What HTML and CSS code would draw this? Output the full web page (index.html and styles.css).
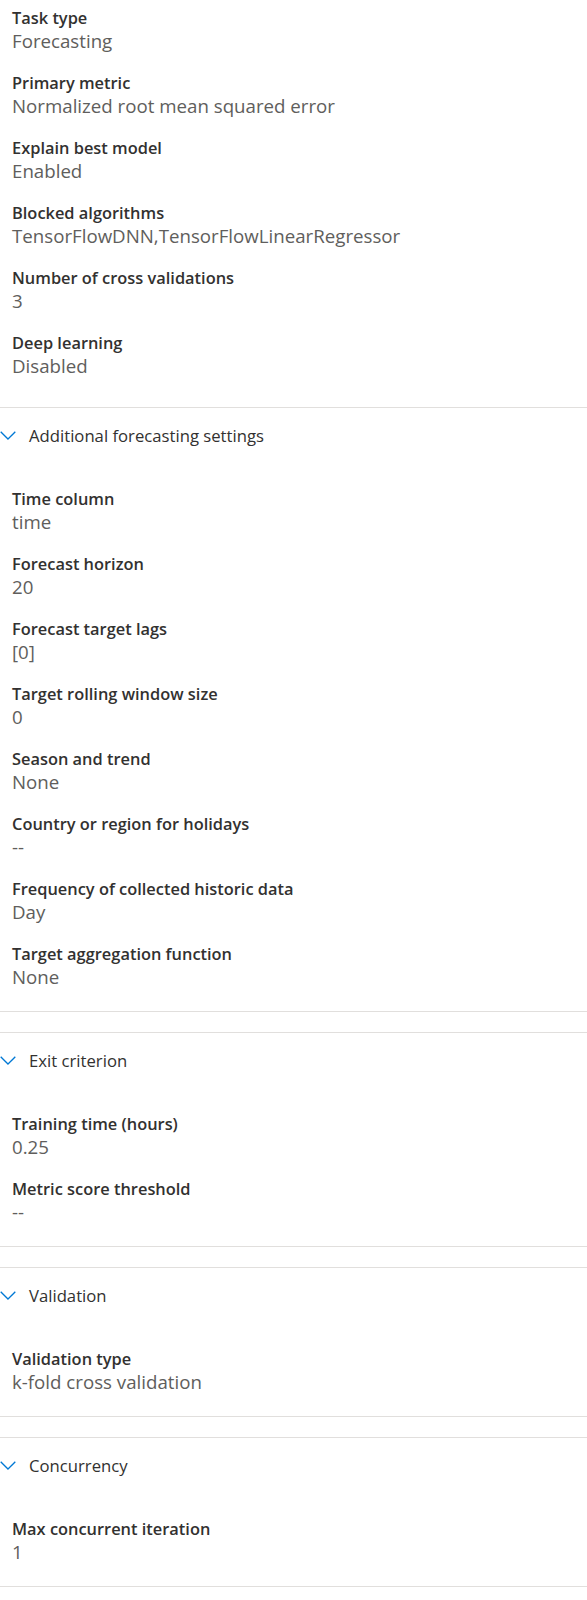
FILE: index.html
```html
<!DOCTYPE html>
<html>
<head>
<meta charset="utf-8">
<link rel="stylesheet" href="styles.css">
</head>
<body>
<div class="page">
  <div class="general">
    <div class="item"><div class="label">Task type</div><div class="value">Forecasting</div></div>
    <div class="item"><div class="label">Primary metric</div><div class="value">Normalized root mean squared error</div></div>
    <div class="item"><div class="label">Explain best model</div><div class="value">Enabled</div></div>
    <div class="item"><div class="label">Blocked algorithms</div><div class="value">TensorFlowDNN,TensorFlowLinearRegressor</div></div>
    <div class="item"><div class="label">Number of cross validations</div><div class="value">3</div></div>
    <div class="item"><div class="label">Deep learning</div><div class="value">Disabled</div></div>
  </div>
  <div class="section">
    <div class="section-header"><svg class="chev" viewBox="0 0 16 10"><path d="M0.7 0.7 L8 8 L15.3 0.7"/></svg><span>Additional forecasting settings</span></div>
    <div class="section-body">
      <div class="item"><div class="label">Time column</div><div class="value">time</div></div>
      <div class="item"><div class="label">Forecast horizon</div><div class="value">20</div></div>
      <div class="item"><div class="label">Forecast target lags</div><div class="value">[0]</div></div>
      <div class="item"><div class="label">Target rolling window size</div><div class="value">0</div></div>
      <div class="item"><div class="label">Season and trend</div><div class="value">None</div></div>
      <div class="item"><div class="label">Country or region for holidays</div><div class="value">--</div></div>
      <div class="item"><div class="label">Frequency of collected historic data</div><div class="value">Day</div></div>
      <div class="item"><div class="label">Target aggregation function</div><div class="value">None</div></div>
    </div>
  </div>
  <div class="section">
    <div class="section-header"><svg class="chev" viewBox="0 0 16 10"><path d="M0.7 0.7 L8 8 L15.3 0.7"/></svg><span>Exit criterion</span></div>
    <div class="section-body">
      <div class="item"><div class="label">Training time (hours)</div><div class="value">0.25</div></div>
      <div class="item"><div class="label">Metric score threshold</div><div class="value">--</div></div>
    </div>
  </div>
  <div class="section">
    <div class="section-header"><svg class="chev" viewBox="0 0 16 10"><path d="M0.7 0.7 L8 8 L15.3 0.7"/></svg><span>Validation</span></div>
    <div class="section-body">
      <div class="item"><div class="label">Validation type</div><div class="value">k-fold cross validation</div></div>
    </div>
  </div>
  <div class="section">
    <div class="section-header"><svg class="chev" viewBox="0 0 16 10"><path d="M0.7 0.7 L8 8 L15.3 0.7"/></svg><span>Concurrency</span></div>
    <div class="section-body">
      <div class="item"><div class="label">Max concurrent iteration</div><div class="value">1</div></div>
    </div>
  </div>
</div>
</body>
</html>
```
FILE: styles.css
```css
html, body { margin: 0; padding: 0; background: #fff; }
body { font-family: "Open Sans", "Noto Sans", sans-serif; color: #323130; }
.page { width: 587px; }
.general { padding: 7px 0 29px 12px; display: flex; flex-direction: column; gap: 19px; border-bottom: 1px solid #e1dfdd; }
.item { display: flex; flex-direction: column; }
.label { font-size: 16.4px; line-height: 21px; font-weight: 600; color: #323130; }
.value { font-size: 18.7px; line-height: 24px; padding-top: 1px; color: #605e5c; }
.section { border-bottom: 1px solid #e1dfdd; }
.section + .section { margin-top: 20px; border-top: 1px solid #e1dfdd; }
.section-header { height: 55px; display: flex; align-items: center; gap: 13px; font-size: 16.7px; color: #323130; }
.chev { width: 16px; height: 10px; flex: none; }
.chev path { fill: none; stroke: #0078d4; stroke-width: 1.3; }
.section-body { padding: 25px 0 22px 12px; display: flex; flex-direction: column; gap: 19px; }
```
